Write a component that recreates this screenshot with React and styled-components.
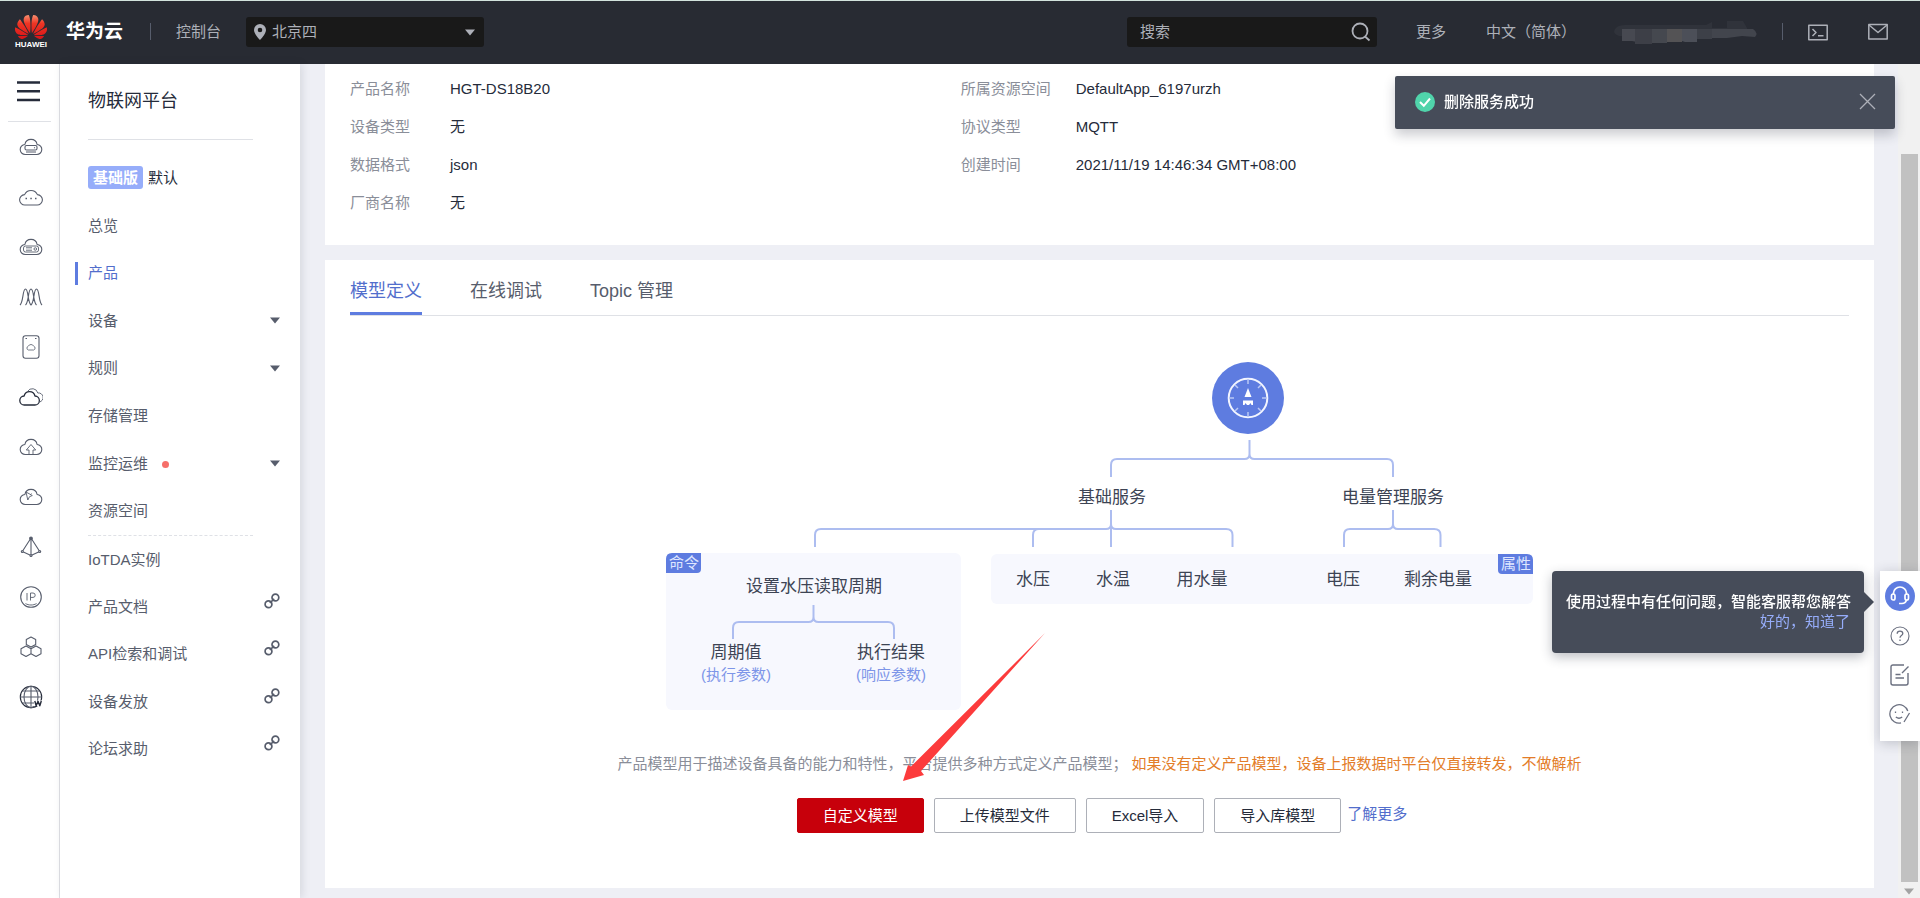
import React from 'react';
import styled, { createGlobalStyle } from "styled-components"
import { SiHuawei } from "react-icons/si"

const GlobalStyle = createGlobalStyle`
* { box-sizing:border-box; }
body {
    margin:0;
    background:#eeeff5;
    color:#252b3a;
    font-family:"Liberation Sans", "Noto Sans CJK SC", sans-serif;
    font-size:15px;
    line-height:20px;
}
button, input, select { font:inherit; }
a { text-decoration:none; }
ul, dl, dd { margin:0; padding:0; list-style:none; }
svg { display:block; }
`

/* ---------- header ---------- */

const Header = styled.header`
    display:flex;
    align-items:center;
    height:64px;
    padding:0 32px 2px 15px;
    border-top:1px solid #d3e4dd;
    background:#282b33;
    color:#adb0b8;
    a { color:inherit; }
`
const Logo = styled.a`
    display:flex;
    flex-direction:column;
    align-items:center;
    width:32px;
    margin-right:19px;
    padding-top:3px;
    span {
        color:white;
        font-size:8px;
        font-weight:bold;
        line-height:12px;
    }
`
const Brand = styled.strong`
    color:white;
    font-size:19px;
`
const Divider = styled.i`
    width:1px;
    height:17px;
    margin:0 25px 0 ${props => props.$left}px;
    background:#575d6c;
`
const RegionBox = styled.div`
    position:relative;
    width:238px;
    margin-left:25px;
    select {
        width:100%;
        height:30px;
        padding:0 26px;
        border:none;
        border-radius:3px;
        background:#191919;
        color:#adb0b8;
        appearance:none;
    }
    svg {
        position:absolute;
        top:7px;
        pointer-events:none;
    }
    .pin { left:8px; }
    .arrow { right:9px; top:12px; }
`
const SearchBox = styled.form`
    display:flex;
    align-items:center;
    width:250px;
    height:30px;
    margin-left:auto;
    padding:0 6px 0 13px;
    border-radius:3px;
    background:#191919;
    input {
        flex:1;
        min-width:0;
        padding:0;
        border:none;
        outline:none;
        background:none;
        color:#adb0b8;
    }
    input::placeholder { color:#adb0b8; opacity:1; }
`
const IconButton = styled.button`
    display:block;
    padding:0;
    border:none;
    background:none;
    color:inherit;
    cursor:pointer;
`
const HeaderLinks = styled.nav`
    display:flex;
    align-items:center;
    gap:40px;
    margin:0 37px 0 39px;
`
const HeaderTools = styled.div`
    display:flex;
    gap:40px;
`

/* ---------- left side ---------- */

const Body = styled.div`
    display:flex;
    align-items:stretch;
    min-height:calc(100vh - 64px);
`
const Rail = styled.nav`
    flex:none;
    width:60px;
    border-right:1px solid #dfe1e6;
    background:white;
    color:#575d6c;
    ul { padding-left:3px; }
    li {
        display:flex;
        align-items:center;
        justify-content:center;
        height:50px;
    }
    li a { color:inherit; }
`
const MenuToggle = styled(IconButton)`
    display:flex;
    align-items:center;
    width:43px;
    height:58px;
    margin:0 8px;
    padding:0 9px 2px;
    border-bottom:1px solid #dfe1e6;
    color:#252b3a;
`
const Sidebar = styled.aside`
    position:relative;
    flex:none;
    width:240px;
    padding:22px 20px 0 28px;
    background:white;
    box-shadow:2px 0 8px rgba(37,43,58,0.12);
    h2 {
        width:165px;
        margin:0;
        padding:1px 0 24px;
        border-bottom:1px solid #dfe1e6;
        font-size:18px;
        font-weight:normal;
        line-height:28px;
    }
`
const Instance = styled.p`
    display:flex;
    align-items:center;
    gap:5px;
    margin:26px 0 13px;
    b {
        padding:0 5px;
        border-radius:3px;
        background:#96adfa;
        color:white;
        line-height:23px;
    }
`
const Menu = styled.ul`
    display:grid;
    grid-auto-rows:1fr;
    height:${props => props.$height}px;
`
const DashedLine = styled.hr`
    width:165px;
    margin:0;
    border:none;
    border-top:1px dashed #dfe1e6;
`
const MenuItem = styled.li`
    display:flex;
    align-items:center;
    a {
        position:relative;
        flex:1;
        display:flex;
        align-items:center;
        color:${props => props.$active ? "#526ecc" : "#575d6c"};
    }
    a::before {
        content:"";
        display:${props => props.$active ? "block" : "none"};
        position:absolute;
        left:-13px;
        width:3px;
        height:23px;
        background:#5e7ce0;
    }
    svg { margin-left:auto; }
    .link { margin-bottom:12px; }
`
const Dot = styled.i`
    width:7px;
    height:7px;
    margin:2px 0 0 14px;
    border-radius:50%;
    background:#f66f6a;
`

/* ---------- content ---------- */

const Main = styled.main`
    flex:1;
    min-width:0;
    padding:0 24px 10px 25px;
`
const Card = styled.section`
    padding:0 25px;
    background:white;
`
const InfoCard = styled(Card)`
    display:grid;
    grid-template-columns:11fr 16fr;
    margin-bottom:15px;
    padding-top:15px;
    padding-bottom:32px;
`
const InfoList = styled.dl`
    display:grid;
    grid-template-columns:${props => props.$label}px 1fr;
    align-content:start;
    row-gap:18px;
    dt { color:#8a8e99; }
`
const Tabs = styled.div`
    display:flex;
    gap:48px;
    border-bottom:1px solid #dfe1e6;
`
const Tab = styled.button`
    height:55px;
    padding:10px 0 0;
    border:none;
    border-bottom:3px solid ${props => props.$active ? "#5e7ce0" : "transparent"};
    background:none;
    color:${props => props.$active ? "#526ecc" : "#575d6c"};
    font-size:18px;
    cursor:pointer;
`
const DiagramBox = styled.div`
    position:relative;
    width:868px;
    margin:45px auto 43px;
`
const Pointer = styled.svg`
    position:absolute;
    left:230px;
    top:270px;
    pointer-events:none;
`
const Hint = styled.p`
    margin:0;
    color:#8a8e99;
    line-height:22px;
    text-align:center;
    em {
        margin-left:4px;
        color:#e37d29;
        font-style:normal;
    }
`
const Actions = styled.div`
    display:flex;
    justify-content:center;
    gap:10px;
    padding:23px 0 55px 5px;
    a {
        margin-left:-4px;
        color:#526ecc;
        line-height:32px;
    }
`
const Button = styled.button`
    height:35px;
    min-width:118px;
    padding:0 25px;
    border:1px solid ${props => props.$primary ? "#c7000b" : "#adb0b8"};
    border-radius:2px;
    background:${props => props.$primary ? "#c7000b" : "white"};
    color:${props => props.$primary ? "white" : "#252b3a"};
    cursor:pointer;
`
const ScrollTrack = styled.div`
    display:flex;
    flex-direction:column;
    align-items:center;
    width:22px;
    padding:90px 0 3px;
    background:#f1f1f1;
    i {
        flex:1;
        width:17px;
        margin-bottom:6px;
        background:#c1c1c1;
    }
`

/* ---------- overlays ---------- */

const Toast = styled.div`
    position:fixed;
    top:76px;
    right:25px;
    display:flex;
    align-items:center;
    gap:9px;
    width:500px;
    height:53px;
    padding:0 19px 2px 20px;
    border-radius:2px;
    background:#464c59;
    box-shadow:0 6px 12px rgba(37,43,58,0.24);
    color:white;
    font-weight:500;
    button { margin-left:auto; color:#adb0b8; }
`
const HelpTip = styled.div`
    position:fixed;
    right:56px;
    bottom:245px;
    width:312px;
    height:82px;
    padding:21px 14px 0;
    border-radius:4px;
    background:#464c59;
    box-shadow:0 4px 12px rgba(37,43,58,0.3);
    color:white;
    font-weight:500;
    text-align:right;
    white-space:nowrap;
    &::after {
        content:"";
        position:absolute;
        left:100%;
        top:21px;
        border:10px solid transparent;
        border-left-color:#464c59;
        border-right:none;
    }
    button {
        margin-left:auto;
        color:#96adfa;
        font-weight:normal;
    }
`
const HelpBar = styled.div`
    position:fixed;
    right:0;
    bottom:157px;
    display:flex;
    flex-direction:column;
    align-items:center;
    width:40px;
    height:170px;
    padding-top:10px;
    background:white;
    box-shadow:0 2px 12px rgba(37,43,58,0.24);
    color:#6b7080;
    button {
        display:flex;
        align-items:center;
        justify-content:center;
        height:39px;
    }
    button:first-child {
        width:30px;
        height:30px;
        margin-bottom:5px;
        border-radius:50%;
        background:#5e7ce0;
        color:white;
    }
`

const CLOUD = "M6 16.5a5 5 0 0 1-.6-10A6.2 6.2 0 0 1 17.6 6.5a5 5 0 0 1-.6 10z"

const Icon = ({ w = 24, h = 24, box, children, ...rest }) => (
    <svg width={w} height={h} viewBox={box || `0 0 ${w} ${h}`} fill="none" stroke="currentColor"
        strokeWidth="1.1" strokeLinejoin="round" aria-hidden="true" {...rest}>
        {children}
    </svg>
)

const railIcons = [
    { name: "弹性云服务器", draw: <><path d={CLOUD} /><rect x="5.5" y="7.5" width="12" height="4.5" rx="1.5" /><path d="M15 9.2v1M6.5 14h10" /></> },
    { name: "云耀云服务器", draw: <><path d="M5.5 17a5.2 5.2 0 0 1-.4-10.4A7 7 0 0 1 17.9 6.6 5.2 5.2 0 0 1 17.5 17z" /><path d="M6 10.5h1.5M10.8 10.5h1.5M15.5 10.5h1.5" strokeWidth="1.5" /></> },
    { name: "裸金属服务器", draw: <><path d={CLOUD} /><rect x="4" y="8" width="15" height="6" rx="2" strokeWidth=".9" /><path d="M6.5 9.8h6M6.5 12.2h6" strokeWidth=".9" /><circle cx="15.8" cy="11" r="1.3" strokeWidth=".9" /></> },
    { name: "弹性伸缩", draw: <path d="M.5 17C4 14 3 1 6 1s2 13 5.5 16M6 17C9.5 14 8.5 1 11.5 1S13.5 14 17 17M11.5 17C15 14 14 1 17 1s2 13 5.5 16" /> },
    { name: "云硬盘", h: 24, draw: <><rect x="3.5" y=".7" width="16" height="22.5" rx="2.5" /><path d="M6 3.5h1.5M15.5 3.5H17" /><path d="M8.8 15a2 2 0 0 1 0-3.8 3 3 0 0 1 5.4 0 2 2 0 0 1 0 3.8z" strokeWidth=".8" /></> },
    { name: "专属云", draw: <><path d="M5 17a4.5 4.5 0 0 1-.4-9A5.6 5.6 0 0 1 15.5 8 4.5 4.5 0 0 1 15.2 17z" stroke="#252b3a" strokeWidth="1.3" /><path d="M8 3.5A5.6 5.6 0 0 1 18.3 5a4.5 4.5 0 0 1 1.5 9" strokeWidth=".9" /></> },
    { name: "对象存储", draw: <><path d={CLOUD} /><path d="M9.5 16.5V12H6.8l4.7-5.5 4.7 5.5h-2.7v4.5" strokeWidth=".9" /></> },
    { name: "云监控", draw: <><path d={CLOUD} /><path d="M6.5 4l1.8 8L10 8.7l2.8-1.2zM12 5.5l-1 1" strokeWidth=".9" /></> },
    { name: "虚拟私有云", h: 22, draw: <><path d="M11.5 2v17.5M11.5 2L2.8 15.5l8.7 4 8.7-4z" /><circle cx="11.5" cy="2.3" r="1.3" fill="currentColor" /><circle cx="2.8" cy="15.5" r="1" fill="white" /><circle cx="20.2" cy="15.5" r="1" fill="white" /><circle cx="11.5" cy="19.5" r="1" fill="white" /></> },
    { name: "弹性公网IP", h: 22, draw: <><circle cx="11.5" cy="11" r="10.3" /><path d="M7.5 7v7.5M11 14.5V7h2.5a2.2 2.2 0 0 1 0 4.4H11M6 17.5c3 2 8 2 11 0" strokeWidth=".9" /></> },
    { name: "区块链", h: 22, draw: <path d="M11.5 1l4.7 2.6v4.8l-4.7 2.7-4.7-2.7V3.6zM6.5 10l5 2.7v5l-5 2.8-5-2.8v-5zM16.5 10l5 2.7v5l-5 2.8-5-2.8v-5z" /> },
    { name: "域名注册", h: 24, draw: <><circle cx="11.5" cy="12" r="10.7" stroke="#252b3a" /><ellipse cx="11.5" cy="12" rx="7" ry="10.7" /><path d="M11.5 1.3v21.4M.8 12h21.4M3 6h17M3 18h12" /><path d="M14.5 15.5h8V21h-8z" fill="white" stroke="none" /><path d="M15.3 16l1.4 4.8 1.8-4.5 1.8 4.5 1.5-4.8" stroke="#252b3a" strokeWidth="1.4" /></> },
]

const Chevron = ({ color = "#575d6c", ...rest }) => (
    <svg width="10" height="7" viewBox="0 0 10 7" aria-hidden="true" {...rest}><path d="M0 .5h10L5 6.5z" fill={color} /></svg>
)

const LinkIcon = () => (
    <Icon className="link" w={16} h={16} strokeWidth="1.7">
        <circle cx="4.5" cy="11.3" r="3.4" />
        <circle cx="11.4" cy="4.5" r="3.4" />
        <path d="M5.8 10l4.4-4.2" />
    </Icon>
)

const topMenu = [
    { text: "总览" },
    { text: "产品", active: true },
    { text: "设备", open: true },
    { text: "规则", open: true },
    { text: "存储管理" },
    { text: "监控运维", open: true, dot: true },
    { text: "资源空间" },
]

const bottomMenu = [
    { text: "IoTDA实例" },
    { text: "产品文档", link: true },
    { text: "API检索和调试", link: true },
    { text: "设备发放", link: true },
    { text: "论坛求助", link: true },
]

const renderMenu = (items) => items.map(item => (
    <MenuItem key={item.text} $active={item.active}>
        <a href="#">
            {item.text}
            {item.dot && <Dot />}
            {item.open && <Chevron />}
            {item.link && <LinkIcon />}
        </a>
    </MenuItem>
))

const TopBar = () => (
    <Header>
        <Logo href="#">
            <svg width="0" height="0" aria-hidden="true">
                <linearGradient id="petal" x1="0" y1="0" x2="0" y2="1">
                    <stop offset="0" stopColor="#f79070" />
                    <stop offset="0.35" stopColor="#ee3524" />
                    <stop offset="1" stopColor="#d81418" />
                </linearGradient>
            </svg>
            <SiHuawei viewBox="0 3 24 18" style={{ width: 32, height: 24 }} fill="url(#petal)" />
            <span>HUAWEI</span>
        </Logo>
        <Brand>华为云</Brand>
        <Divider $left={27} />
        <a href="#">控制台</a>
        <RegionBox>
            <select aria-label="区域" defaultValue="bj4">
                <option value="bj4">北京四</option>
            </select>
            <svg className="pin" width="12" height="16" viewBox="0 0 12 16" aria-hidden="true">
                <path d="M6 0a6 6 0 0 0-6 6c0 4 6 10 6 10s6-6 6-10a6 6 0 0 0-6-6zm0 8.3a2.3 2.3 0 1 1 0-4.6 2.3 2.3 0 0 1 0 4.6z" fill="#adb0b8" fillRule="evenodd" />
            </svg>
            <Chevron className="arrow" color="#adb0b8" />
        </RegionBox>
        <SearchBox>
            <input type="text" aria-label="搜索" placeholder="搜索" />
            <IconButton type="button" aria-label="开始搜索">
                <Icon w={20} h={20} strokeWidth="1.8"><circle cx="9" cy="9" r="7.5" /><path d="M14 14.5l4.500 4" /></Icon>
            </IconButton>
        </SearchBox>
        <HeaderLinks>
            <a href="#">更多</a>
            <a href="#">中文（简体）</a>
        </HeaderLinks>
        {/* account name, masked */}
        <svg width="144" height="24" viewBox="0 0 144 24" aria-hidden="true">
            <path d="M3 8q2-3 10-3h80l6-3v6h15V1h16l4 7v8H6q-8-3-3-8z" fill="#30333b" />
            <path d="M9 9h15v13l-5-1H9z" fill="#474951" />
            <path d="M24 9h15v15H22V9z" fill="#3d3f47" />
            <path d="M39 9h15v14H39z" fill="#45484f" />
            <path d="M54 9h15v13H54z" fill="#545355" />
            <path d="M69 9h15v13H72l-3-1z" fill="#4c4f58" />
            <path d="M84 9h15v10H84z" fill="#3d4048" />
            <path d="M99 9h41q6 4 2 8l-13-1-15 2H99z" fill="#42454d" />
        </svg>
        <Divider $left={25} />
        <HeaderTools>
            <IconButton aria-label="命令行">
                <Icon w={20} h={18} strokeWidth="1.5"><path d="M.8 2.3h18.400v14.500H.8z" /><path d="M4.500 6l3.500 3.500-3.500 3.500M10 12.800h5.500" /></Icon>
            </IconButton>
            <IconButton aria-label="消息">
                <Icon w={20} h={18} strokeWidth="1.5"><path d="M.8 1.500h18.400V16H.8z" /><path d="M1 2l9 7.500L19 2" /></Icon>
            </IconButton>
        </HeaderTools>
    </Header>
)

const labels = [
    { x: 446, y: 136, text: "基础服务" },
    { x: 727, y: 136, text: "电量管理服务" },
    { x: 148, y: 225, text: "设置水压读取周期" },
    { x: 70, y: 291, text: "周期值" },
    { x: 225, y: 291, text: "执行结果" },
    { x: 367, y: 218, text: "水压" },
    { x: 447, y: 218, text: "水温" },
    { x: 536, y: 218, text: "用水量" },
    { x: 677, y: 218, text: "电压" },
    { x: 772, y: 218, text: "剩余电量" },
]

const ModelDiagram = () => (
    <svg width="868" height="349" viewBox="0 0 868 349" role="img" aria-label="产品模型">
        <rect y="192" width="295" height="157" rx="6" fill="#f7f8fe" />
        <rect x="325" y="193" width="542" height="50" rx="6" fill="#f7f8fe" />
        <path d="M6 192h29v16q0 4-4 4H0v-14q0-6 6-6z" fill="#5e7ce0" />
        <path d="M832 193h29q6 0 6 6v14h-31q-4 0-4-4z" fill="#5e7ce0" />

        <circle cx="582" cy="37" r="36" fill="#5e7ce0" />
        <circle cx="582" cy="37" r="19.3" fill="none" stroke="#f2f5ff" strokeWidth="2" />
        <path d="M582 18v5M582 51v5M563 37h5M596 37h5M569 24l3 3M595 24l-3 3M569 50l3-3M595 50l-3-3" stroke="#b9c7f5" strokeWidth="1.5" />
        <path d="M582 27l3.500 9h-7zM577 39.500h10v4.500h-1.500l-1-2-1.500 2h-2l-1.500-2-1 2H577z" fill="white" />

        <g fill="none" stroke="#adbdf0" strokeWidth="2">
            <path d="M583.5 79v14q0 5-5 5H451q-6 0-6 6v12M583.5 93q0 5 5 5H721q6 0 6 6v12" />
            <path d="M445 149v37M445 163q0 5-5 5H155q-6 0-6 6v12M445 163q0 5 5 5H560q6.5 0 6.5 6v12M373 168q-6 0-6 6v12" />
            <path d="M727 149v14q0 5-5 5H684q-6 0-6 6v12M727 163q0 5 5 5H768q6.5 0 6.500 6v12" />
            <path d="M147.500 244v12q0 5-5 5H73q-6 0-6 6v11M147.500 256q0 5 5 5H222q6 0 6 6v11" />
        </g>

        <g textAnchor="middle" fontSize="17" fill="#3d4454">
            {labels.map(l => <text key={l.text} x={l.x} y={l.y + 6}>{l.text}</text>)}
        </g>
        <g textAnchor="middle" fontSize="15" fill="#7d95e8">
            <text x="70" y="319">(执行参数)</text>
            <text x="225" y="319">(响应参数)</text>
        </g>
        <g textAnchor="middle" fontSize="15" fill="#dfe6ff">
            <text x="18" y="207">命令</text>
            <text x="850" y="208">属性</text>
        </g>
    </svg>
)

const App = () => {
    return (
        <>
            <GlobalStyle />
            <TopBar />
            <Body>
                <Rail>
                    <MenuToggle aria-label="服务列表">
                        <Icon w={23} h={21} strokeWidth="2.6"><path d="M0 1.500h23M0 10.300h23M0 19h23" /></Icon>
                    </MenuToggle>
                    <ul>
                        {railIcons.map(icon => (
                            <li key={icon.name}>
                                <a href="#" aria-label={icon.name}>
                                    <Icon w={24} h={icon.h || 18} box={`-0.5 0 24 ${icon.h || 18}`}>{icon.draw}</Icon>
                                </a>
                            </li>
                        ))}
                    </ul>
                </Rail>
                <Sidebar>
                    <h2>物联网平台</h2>
                    <Instance><b>基础版</b>默认</Instance>
                    <Menu $height={333}>{renderMenu(topMenu)}</Menu>
                    <DashedLine />
                    <Menu $height={237}>{renderMenu(bottomMenu)}</Menu>
                </Sidebar>
                <Main>
                    <InfoCard>
                        <InfoList $label={100}>
                            <dt>产品名称</dt><dd>HGT-DS18B20</dd>
                            <dt>设备类型</dt><dd>无</dd>
                            <dt>数据格式</dt><dd>json</dd>
                            <dt>厂商名称</dt><dd>无</dd>
                        </InfoList>
                        <InfoList $label={115}>
                            <dt>所属资源空间</dt><dd>DefaultApp_6197urzh</dd>
                            <dt>协议类型</dt><dd>MQTT</dd>
                            <dt>创建时间</dt><dd>2021/11/19 14:46:34 GMT+08:00</dd>
                        </InfoList>
                    </InfoCard>
                    <Card>
                        <Tabs role="tablist">
                            <Tab role="tab" aria-selected="true" $active>模型定义</Tab>
                            <Tab role="tab" aria-selected="false">在线调试</Tab>
                            <Tab role="tab" aria-selected="false">Topic 管理</Tab>
                        </Tabs>
                        <DiagramBox>
                            <ModelDiagram />
                            <Pointer width="150" height="154" viewBox="0 0 150 154" aria-hidden="true">
                                <path d="M149 2L25 140l3 4-21 6 5-16 3 1.500z" fill="#fc3b3c" />
                            </Pointer>
                        </DiagramBox>
                        <Hint>
                            产品模型用于描述设备具备的能力和特性，平台提供多种方式定义产品模型；
                            <em>如果没有定义产品模型，设备上报数据时平台仅直接转发，不做解析</em>
                        </Hint>
                        <Actions>
                            <Button $primary>自定义模型</Button>
                            <Button>上传模型文件</Button>
                            <Button>Excel导入</Button>
                            <Button>导入库模型</Button>
                            <a href="#">了解更多</a>
                        </Actions>
                    </Card>
                </Main>
                <ScrollTrack>
                    <i />
                    <Chevron color="#a3a3a3" />
                </ScrollTrack>
            </Body>

            <Toast role="status">
                <svg width="20" height="20" viewBox="0 0 20 20" aria-hidden="true">
                    <circle cx="10" cy="10" r="10" fill="#50d4ab" />
                    <path d="M5 10l3.800 3.800L15 6.500" fill="none" stroke="white" strokeWidth="2" />
                </svg>
                删除服务成功
                <IconButton aria-label="关闭">
                    <Icon w={17} h={17} strokeWidth="1.3"><path d="M1 1l15 15M16 1L1 16" /></Icon>
                </IconButton>
            </Toast>

            <HelpTip>
                使用过程中有任何问题，智能客服帮您解答
                <IconButton>好的，知道了</IconButton>
            </HelpTip>
            <HelpBar>
                <IconButton aria-label="智能客服">
                    <Icon w={20} h={20} strokeWidth="1.7">
                        <path d="M3.500 8.500V7a6.500 6 0 0 1 13 0v1.500" />
                        <rect x="1.5" y="8" width="3.5" height="6" rx="1.7" />
                        <rect x="15" y="8" width="3.5" height="6" rx="1.7" />
                        <path d="M16.500 14q-1 3.500-4.500 3.500H9" />
                    </Icon>
                </IconButton>
                <IconButton aria-label="帮助">
                    <Icon w={20} h={20}><circle cx="10" cy="10" r="9" /><path d="M7.200 7.800q0-2.600 2.800-2.600t2.800 2.400c0 2-2.800 2-2.800 4.200M10 13.500v1.500" strokeWidth="1.3" /></Icon>
                </IconButton>
                <IconButton aria-label="建议">
                    <Icon w={20} h={22} strokeWidth="1.4"><path d="M14 1H3q-2 0-2 2v16q0 2 2 2h13q2 0 2-2V9M18.500 2.500L12 9M5.500 10.500h5M5.500 14h8.500" /></Icon>
                </IconButton>
                <IconButton aria-label="评价">
                    <Icon w={22} h={20}><path d="M18.800 7A9.200 9.200 0 1 0 12 18.900M20.500 9l-5.500 9M6.500 7.500v1.500M13.500 7.500v1.500M6.800 13q3.200 2.500 6.400 0" strokeWidth="1.3" /></Icon>
                </IconButton>
            </HelpBar>
        </>
    );
}

export default App;
